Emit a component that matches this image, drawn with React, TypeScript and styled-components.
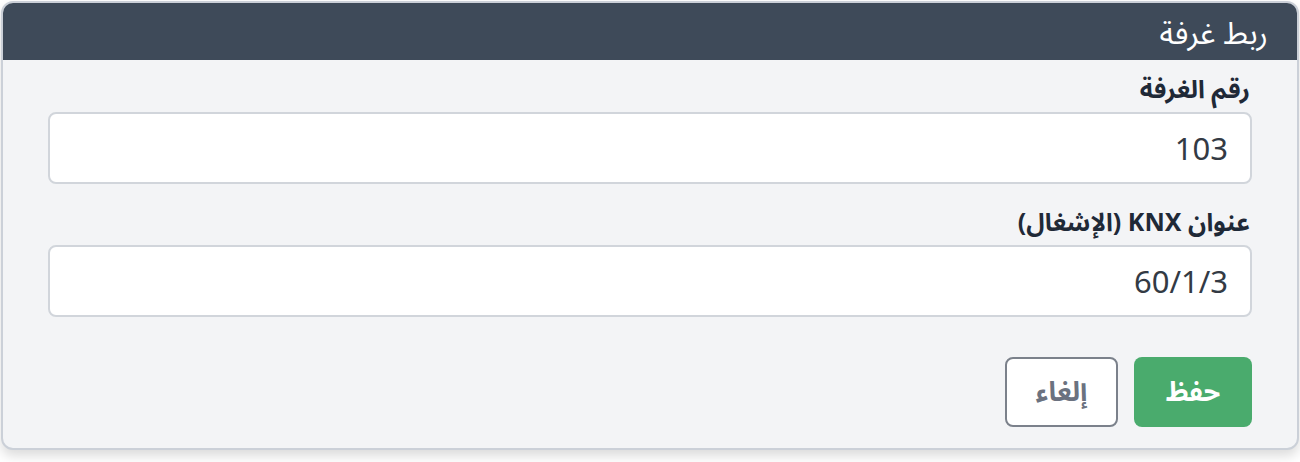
import React from "react";
import styled, { createGlobalStyle } from "styled-components";

const GlobalStyle = createGlobalStyle`
  html, body {
    margin: 0;
    padding: 0;
    background: #ffffff;
  }
  body {
    font-family: "Noto Sans", "Noto Sans Arabic", "DejaVu Sans", sans-serif;
  }
`;

const Page = styled.div`
  padding: 1px 1px 0 1px;
  height: 462px;
  box-sizing: border-box;
`;

const Dialog = styled.div`
  direction: rtl;
  width: 1298px;
  height: 449px;
  box-sizing: border-box;
  border: 2px solid #cbd0d8;
  border-radius: 12px;
  background: #f3f4f6;
  overflow: hidden;
  box-shadow: 0 6px 12px rgba(0, 0, 0, 0.14);
  display: flex;
  flex-direction: column;
`;

const Header = styled.div`
  height: 57px;
  background: #3e4a59;
  color: #ffffff;
  display: flex;
  align-items: center;
  padding: 0 29px;
  font-size: 31px;
  line-height: 40px;
  flex-shrink: 0;
`;

const Body = styled.div`
  padding: 12px 45px 0 45px;
  display: flex;
  flex-direction: column;
`;

const Field = styled.div`
  display: flex;
  flex-direction: column;
  & + & {
    margin-top: 21px;
  }
`;

const Label = styled.label`
  font-size: 25px;
  font-weight: 700;
  color: #1f2937;
  padding-right: 2px;
  margin-bottom: 8px;
  line-height: 32px;
`;

const Input = styled.input`
  direction: ltr;
  text-align: right;
  height: 72px;
  box-sizing: border-box;
  border: 2px solid #d1d5db;
  border-radius: 8px;
  background: #ffffff;
  padding: 0 22px;
  font-family: "Noto Sans", "DejaVu Sans", sans-serif;
  font-size: 31px;
  color: #333a44;
  outline: none;
`;

const Actions = styled.div`
  display: flex;
  gap: 16px;
  margin-top: 40px;
`;

const Button = styled.button<{ variant: "primary" | "ghost" }>`
  height: 70px;
  box-sizing: border-box;
  border-radius: 8px;
  font-family: "Noto Sans", "Noto Sans Arabic", "DejaVu Sans", sans-serif;
  font-size: 27px;
  font-weight: 700;
  cursor: pointer;
  padding: 0;
  width: ${({ variant }) => (variant === "primary" ? "118px" : "113px")};
  background: ${({ variant }) => (variant === "primary" ? "#4aab6d" : "#ffffff")};
  color: ${({ variant }) => (variant === "primary" ? "#ffffff" : "#6b7280")};
  border: ${({ variant }) => (variant === "primary" ? "none" : "2px solid #7b818b")};
`;

export default function App() {
  return (
    <Page>
      <GlobalStyle />
      <Dialog>
        <Header>ربط غرفة</Header>
        <Body>
          <Field>
            <Label>رقم الغرفة</Label>
            <Input defaultValue="103" />
          </Field>
          <Field>
            <Label>عنوان KNX (الإشغال)</Label>
            <Input defaultValue="60/1/3" />
          </Field>
          <Actions>
            <Button variant="primary">حفظ</Button>
            <Button variant="ghost">إلغاء</Button>
          </Actions>
        </Body>
      </Dialog>
    </Page>
  );
}
